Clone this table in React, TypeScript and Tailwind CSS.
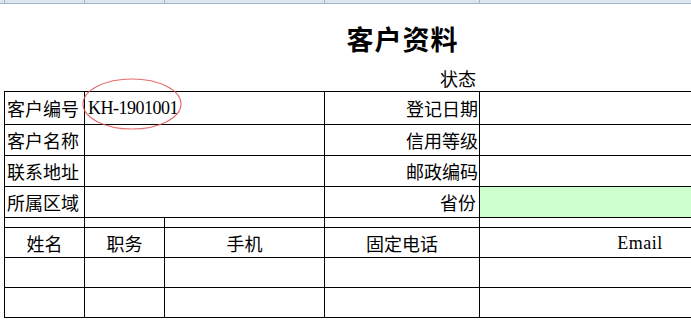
import React from "react";

const cjk = { fontFamily: '"Noto Sans CJK SC", "Noto Sans", sans-serif' };
const serif = { fontFamily: '"Liberation Serif", "Noto Sans CJK SC", serif' };

function Cell({
  children,
  className = "",
  align = "left",
  span = 1,
  fill = "bg-white",
}: {
  children?: React.ReactNode;
  className?: string;
  align?: "left" | "right" | "center";
  span?: number;
  fill?: string;
}) {
  const justify =
    align === "right" ? "justify-end pr-[1px]" : align === "center" ? "justify-center" : "justify-start pl-[2px]";
  const spanCls = span === 2 ? "col-span-2" : "";
  return (
    <div className={`flex items-center leading-none ${fill} ${justify} ${spanCls} ${className}`}>{children}</div>
  );
}

export default function App() {
  return (
    <div className="relative w-[691px] h-[320px] overflow-hidden bg-white text-black text-[18px]" style={cjk}>
      {/* column header strip of the sheet */}
      <div className="flex h-[4px] bg-[#dde6f0] border-b border-[#a3b8cf]">
        <div className="w-[5px] border-r border-[#a3b8cf]" />
        <div className="w-[80px] border-r border-[#a3b8cf]" />
        <div className="w-[80px] border-r border-[#a3b8cf]" />
        <div className="w-[160px] border-r border-[#a3b8cf]" />
        <div className="w-[155px] border-r border-[#a3b8cf]" />
        <div className="flex-1" />
      </div>

      <div className="ml-[4px] w-[797px]">
        {/* title */}
        <div className="h-[60px] pt-[21px] flex justify-center">
          <div className="text-[27px] font-bold leading-none tracking-[1px]">客户资料</div>
        </div>

        {/* status line */}
        <div className="h-[27px] grid grid-cols-[80px_80px_160px_155px_322px] items-end pb-[4px]">
          <div />
          <div />
          <div />
          <div className="text-right pr-[3px] leading-none">状态</div>
          <div />
        </div>

        {/* customer sheet */}
        <div className="grid grid-cols-[79px_79px_159px_154px_320px] grid-rows-[32px_30px_30px_30px_9px_29px_29px_29px] gap-px bg-black p-px">
          <Cell>客户编号</Cell>
          <Cell span={2}>
            <span className="text-[18px] tracking-[-0.5px] pl-[1px]" style={serif}>
              KH-1901001
            </span>
          </Cell>
          <Cell align="right">登记日期</Cell>
          <Cell />

          <Cell>客户名称</Cell>
          <Cell span={2} />
          <Cell align="right">信用等级</Cell>
          <Cell />

          <Cell>联系地址</Cell>
          <Cell span={2} />
          <Cell align="right">邮政编码</Cell>
          <Cell />

          <Cell>所属区域</Cell>
          <Cell span={2} />
          <Cell align="right" className="pr-[3px]">
            省份
          </Cell>
          <Cell fill="bg-[#ccffcc]" />

          <Cell />
          <Cell />
          <Cell />
          <Cell />
          <Cell />

          <Cell align="center">姓名</Cell>
          <Cell align="center">职务</Cell>
          <Cell align="center">手机</Cell>
          <Cell align="center">固定电话</Cell>
          <Cell align="center">
            <span className="tracking-[0.5px]" style={serif}>Email</span>
          </Cell>

          <Cell />
          <Cell />
          <Cell />
          <Cell />
          <Cell />

          <Cell />
          <Cell />
          <Cell />
          <Cell />
          <Cell />
        </div>
      </div>

      {/* hand-drawn highlight around the customer number */}
      <svg className="absolute left-[80px] top-[77px] pointer-events-none" width="104" height="56" viewBox="0 0 104 56">
        <ellipse cx="52" cy="27" rx="49" ry="25" fill="none" stroke="#e05c5c" strokeWidth="1.1" opacity="0.9" />
      </svg>
    </div>
  );
}
